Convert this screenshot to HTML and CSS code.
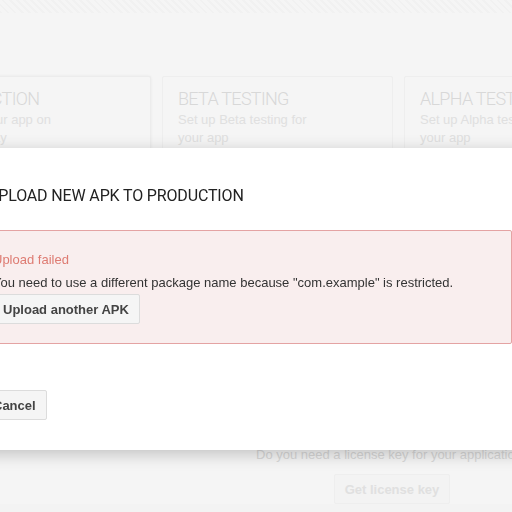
FILE: index.html
```html
<!DOCTYPE html>
<html>
<head>
<meta charset="utf-8">
<link rel="stylesheet" href="styles.css">
</head>
<body>
<div class="stripe"></div>
<div class="page">
  <div class="cards">
    <div class="card card-active">
      <div class="card-title">PRODUCTION</div>
      <div class="card-text">Publish your app on<br>Google Play</div>
    </div>
    <div class="card">
      <div class="card-title">BETA TESTING</div>
      <div class="card-text">Set up Beta testing for<br>your app</div>
    </div>
    <div class="card">
      <div class="card-title">ALPHA TESTING</div>
      <div class="card-text">Set up Alpha testing for<br>your app</div>
    </div>
  </div>
  <div class="license">
    <div class="license-text">Do you need a license key for your application?</div>
    <div class="btn btn-faded">Get license key</div>
  </div>
</div>

<div class="dialog">
  <div class="dialog-title">UPLOAD NEW APK TO PRODUCTION</div>
  <div class="error-box">
    <div class="error-head">Upload failed</div>
    <div class="error-msg">You need to use a different package name because "com.example" is restricted.</div>
    <div class="btn">Upload another APK</div>
  </div>
  <div class="dialog-footer">
    <div class="btn">Cancel</div>
  </div>
</div>
</body>
</html>
```
FILE: styles.css
```css
html, body {
  margin: 0;
  padding: 0;
}
body {
  width: 512px;
  height: 512px;
  overflow: hidden;
  background: #f3f3f3;
  font-family: "Liberation Sans", Arial, sans-serif;
  font-size: 13px;
}
.stripe {
  height: 13px;
  background: repeating-linear-gradient(45deg, #f1f1f1 0, #f1f1f1 2px, #f5f5f5 2px, #f5f5f5 5px);
}
.page {
  background: #f5f5f5;
  padding-top: 63px;
}
.cards {
  display: flex;
  gap: 11px;
  margin-left: -80px;
}
.card {
  flex: 0 0 auto;
  width: 231px;
  height: 110px;
  box-sizing: border-box;
  border: 1px solid #eeeeee;
  border-radius: 2px;
  padding: 11px 15px;
  background: #f5f5f5;
}
.card-active {
  border-color: #ececec;
  box-shadow: 0 0 3px rgba(0,0,0,0.06);
}
.card-title {
  font-family: Roboto, "Liberation Sans", sans-serif;
  font-size: 18px;
  font-weight: 300;
  letter-spacing: -0.7px;
  color: #d8d8d8;
  line-height: 22px;
  margin-bottom: 1px;
}
.card-text {
  color: #e0e0e0;
  font-size: 13px;
  line-height: 18px;
}
.license {
  margin-top: 261px;
  padding-left: 256px;
  display: flex;
  flex-direction: column;
  align-items: flex-start;
}
.license-text {
  color: #d8d8d8;
  white-space: nowrap;
  line-height: 16px;
}
.btn {
  display: inline-flex;
  align-items: center;
  box-sizing: border-box;
  height: 30px;
  padding: 0 10px;
  background: #f5f5f5;
  border: 1px solid #dcdcdc;
  border-radius: 2px;
  font-weight: bold;
  color: #444444;
  font-size: 13px;
  white-space: nowrap;
}
.btn-faded {
  margin-top: 11px;
  margin-left: 78px;
  width: 116px;
  justify-content: center;
  padding: 0;
  background: #f3f3f3;
  border-color: #eeeeee;
  color: #e0e0e0;
}
.dialog {
  position: fixed;
  top: 148px;
  left: -40px;
  width: 600px;
  height: 302px;
  box-sizing: border-box;
  background: #ffffff;
  box-shadow: 0 4px 16px rgba(0,0,0,0.22);
  padding: 38px 0 0 20px;
}
.dialog-title {
  font-family: Roboto, "Liberation Sans", sans-serif;
  font-size: 16px;
  letter-spacing: -0.15px;
  color: #222222;
  line-height: 20px;
  margin-left: 8px;
}
.error-box {
  margin-top: 24px;
  width: 532px;
  height: 114px;
  box-sizing: border-box;
  border: 1px solid #e4a3a3;
  border-radius: 2px;
  background: #f9eeee;
  padding: 21px 0 0 12px;
}
.error-head {
  color: #de7b72;
  line-height: 16px;
}
.error-msg {
  color: #333333;
  line-height: 16px;
  margin-top: 7px;
  margin-bottom: 3px;
}
.error-box .btn {
  margin-left: -1px;
  height: 30px;
}
.dialog-footer {
  margin-top: 46px;
  margin-left: 2px;
}
```
